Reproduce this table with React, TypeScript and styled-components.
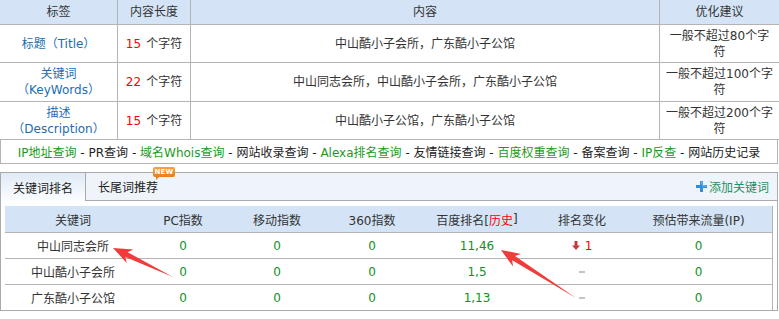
import styled, { createGlobalStyle } from "styled-components"

const GlobalStyle = createGlobalStyle`
  html, body {
    margin: 0;
    overflow: hidden;
    background: #fff;
  }
  body {
    font-family: "DejaVu Sans", "Noto Sans CJK SC", sans-serif;
    font-size: 12px;
    color: #333;
  }
  * { box-sizing: border-box; }
`

const Page = styled.div`
  position: relative;
  width: 779px;
  height: 319px;
`

/* ---------- meta info table ---------- */

const InfoTable = styled.div`
  width: 779px;
`

const InfoRow = styled.div<{ $h: number; $head?: boolean }>`
  display: grid;
  grid-template-columns: 118px 73px 469px 119px;
  height: ${(p) => p.$h}px;
  border-bottom: 1px solid #b4b4b4;
  background: ${(p) => (p.$head ? "#d4e4f6" : "#fff")};
`

const InfoCell = styled.div`
  display: flex;
  align-items: center;
  justify-content: center;
  text-align: center;
  line-height: 16px;
  padding: 0 5px;
  border-right: 1px solid #b4b4b4;
  &:last-child { border-right: none; }
`

const TagName = styled.span`
  color: #1c6db4;
`

const Count = styled.span`
  color: #f00;
  margin-right: 5px;
`

const LinkBar = styled.div`
  width: 778px;
  height: 24px;
  display: flex;
  align-items: center;
  justify-content: center;
  border: 1px solid #b4b4b4;
  border-top: none;
  color: #222;
  white-space: pre;
`

const ToolLink = styled.span<{ $green?: boolean }>`
  color: ${(p) => (p.$green ? "#1b9a1b" : "#222")};
`

/* ---------- keyword tabs ---------- */

const TabBox = styled.div`
  margin-top: 8px;
  width: 778px;
  border: 1px solid #aaa;
`

const TabBar = styled.div`
  display: flex;
  align-items: center;
  height: 28px;
  background: #eef4fa;
  border-bottom: 1px solid #aaa;
`

const Tab = styled.div<{ $active?: boolean }>`
  position: relative;
  display: flex;
  align-items: center;
  justify-content: center;
  width: ${(p) => (p.$active ? 85 : 84)}px;
  height: ${(p) => (p.$active ? 28 : 27)}px;
  align-self: flex-start;
  color: #222;
  ${(p) =>
    p.$active &&
    `
    background: linear-gradient(#dfeaf6, #fbfdff);
    border-right: 1px solid #aaa;
  `}
`

const NewBadge = styled.span`
  position: absolute;
  top: -6px;
  left: 67px;
  width: 22px;
  height: 10px;
  border-radius: 2px;
  background: linear-gradient(#f7a43c, #ea7d16);
  color: #fff;
  font: bold 7px/10px "DejaVu Sans", sans-serif;
  text-align: center;
  letter-spacing: 0.2px;
  &::after {
    content: "";
    position: absolute;
    left: 3px;
    bottom: -3px;
    border-left: 3px solid #ea7d16;
    border-bottom: 3px solid transparent;
  }
`

const AddKeyword = styled.div`
  margin-left: auto;
  padding-right: 8px;
  display: flex;
  align-items: center;
  gap: 2px;
  color: #1e9160;
`

const TabBody = styled.div`
  padding: 5px 4px 0 4px;
`

const RankTable = styled.div`
  width: 768px;
  border-right: 1px solid #b4b4b4;
`

const RankRow = styled.div<{ $h: number; $head?: boolean; $last?: boolean }>`
  display: grid;
  grid-template-columns: 136px 84px 104px 86px 124px 86px 147px;
  height: ${(p) => p.$h}px;
  background: ${(p) => (p.$head ? "#d4e4f6" : "#fff")};
  border-bottom: ${(p) => (p.$last ? "none" : "1px solid #b4b4b4")};
`

const RankCell = styled.div<{ $num?: boolean }>`
  display: flex;
  align-items: center;
  justify-content: center;
  color: ${(p) => (p.$num ? "#13901f" : "#333")};
`

const Red = styled.span`
  color: #f00;
`

const Drop = styled.span`
  display: inline-flex;
  align-items: center;
  gap: 5px;
  color: #f00;
`

const NoChange = styled.span`
  display: inline-block;
  width: 6px;
  height: 2px;
  background: #c4c4c4;
`

const Overlay = styled.svg`
  position: absolute;
  left: 0;
  top: 0;
  pointer-events: none;
`

const infoRows = [
  { h: 38, tag: ["标题（Title）"], count: 15, content: "中山酷小子会所，广东酷小子公馆", limit: 80 },
  { h: 39, tag: ["关键词", "（KeyWords）"], count: 22, content: "中山同志会所，中山酷小子会所，广东酷小子公馆", limit: 100 },
  { h: 38, tag: ["描述", "（Description）"], count: 15, content: "中山酷小子公馆，广东酷小子公馆", limit: 200 },
]

const tools = [
  { name: "IP地址查询", green: true },
  { name: "PR查询" },
  { name: "域名Whois查询", green: true },
  { name: "网站收录查询" },
  { name: "Alexa排名查询", green: true },
  { name: "友情链接查询" },
  { name: "百度权重查询", green: true },
  { name: "备案查询" },
  { name: "IP反查", green: true },
  { name: "网站历史记录" },
]

const ranks = [
  { kw: "中山同志会所", rank: "11,46", change: 1 },
  { kw: "中山酷小子会所", rank: "1,5", change: 0 },
  { kw: "广东酷小子公馆", rank: "1,13", change: 0 },
]

// screenshot-style annotation arrow from tail to tip
const arrowPoints = (tail: [number, number], tip: [number, number]) => {
  const dx = tip[0] - tail[0]
  const dy = tip[1] - tail[1]
  const len = Math.hypot(dx, dy)
  const ux = dx / len
  const uy = dy / len
  const nx = -uy
  const ny = ux
  const at = (back: number, side: number) =>
    `${(tip[0] - ux * back + nx * side).toFixed(1)},${(tip[1] - uy * back + ny * side).toFixed(1)}`
  return [
    `${tail[0]},${tail[1]}`,
    at(15, 2.6),
    at(19, 7.5),
    `${tip[0]},${tip[1]}`,
    at(19, -7.5),
    at(15, -2.6),
  ].join(" ")
}

const App = () => {
  return (
    <Page>
      <GlobalStyle />
      <InfoTable>
        <InfoRow $h={25} $head>
          <InfoCell>标签</InfoCell>
          <InfoCell>内容长度</InfoCell>
          <InfoCell>内容</InfoCell>
          <InfoCell>优化建议</InfoCell>
        </InfoRow>
        {infoRows.map((r) => (
          <InfoRow key={r.limit} $h={r.h}>
            <InfoCell>
              <TagName>
                {r.tag.map((t, i) => (
                  <div key={i}>{t}</div>
                ))}
              </TagName>
            </InfoCell>
            <InfoCell>
              <Count>{r.count}</Count>个字符
            </InfoCell>
            <InfoCell>{r.content}</InfoCell>
            <InfoCell>{`一般不超过${r.limit}个字符`}</InfoCell>
          </InfoRow>
        ))}
      </InfoTable>

      <LinkBar>
        {tools.map((t, i) => (
          <span key={t.name}>
            {i > 0 && " - "}
            <ToolLink $green={t.green}>{t.name}</ToolLink>
          </span>
        ))}
      </LinkBar>

      <TabBox>
        <TabBar>
          <Tab $active>关键词排名</Tab>
          <Tab>
            长尾词推荐
            <NewBadge>NEW</NewBadge>
          </Tab>
          <AddKeyword>
            <svg width="11" height="11" viewBox="0 0 11 11">
              <path d="M4 0h3v4h4v3H7v4H4V7H0V4h4z" fill="#2f8fd9" />
              <path d="M4.5 0.5h2v4h4v1h-4" fill="#7cc0f0" />
            </svg>
            添加关键词
          </AddKeyword>
        </TabBar>
        <TabBody>
          <RankTable>
            <RankRow $h={27} $head>
              <RankCell>关键词</RankCell>
              <RankCell>PC指数</RankCell>
              <RankCell>移动指数</RankCell>
              <RankCell>360指数</RankCell>
              <RankCell>
                百度排名[<Red>历史</Red>]
              </RankCell>
              <RankCell>排名变化</RankCell>
              <RankCell>预估带来流量(IP)</RankCell>
            </RankRow>
            {ranks.map((r, i) => (
              <RankRow key={r.kw} $h={i === 2 ? 25 : 26} $last={i === 2}>
                <RankCell>{r.kw}</RankCell>
                <RankCell $num>0</RankCell>
                <RankCell $num>0</RankCell>
                <RankCell $num>0</RankCell>
                <RankCell $num>{r.rank}</RankCell>
                <RankCell>
                  {r.change ? (
                    <Drop>
                      <svg width="8" height="9" viewBox="0 0 8 9">
                        <path d="M2.5 0h3v4.5H8L4 9 0 4.5h2.5z" fill="#c73b3d" />
                      </svg>
                      {r.change}
                    </Drop>
                  ) : (
                    <NoChange />
                  )}
                </RankCell>
                <RankCell $num>0</RankCell>
              </RankRow>
            ))}
          </RankTable>
        </TabBody>
      </TabBox>

      <Overlay width="779" height="319">
        <polygon points={arrowPoints([173, 277], [113, 248])} fill="#f23b3b" />
        <polygon points={arrowPoints([576, 298], [501, 250])} fill="#f23b3b" />
      </Overlay>
    </Page>
  )
}

export default App
